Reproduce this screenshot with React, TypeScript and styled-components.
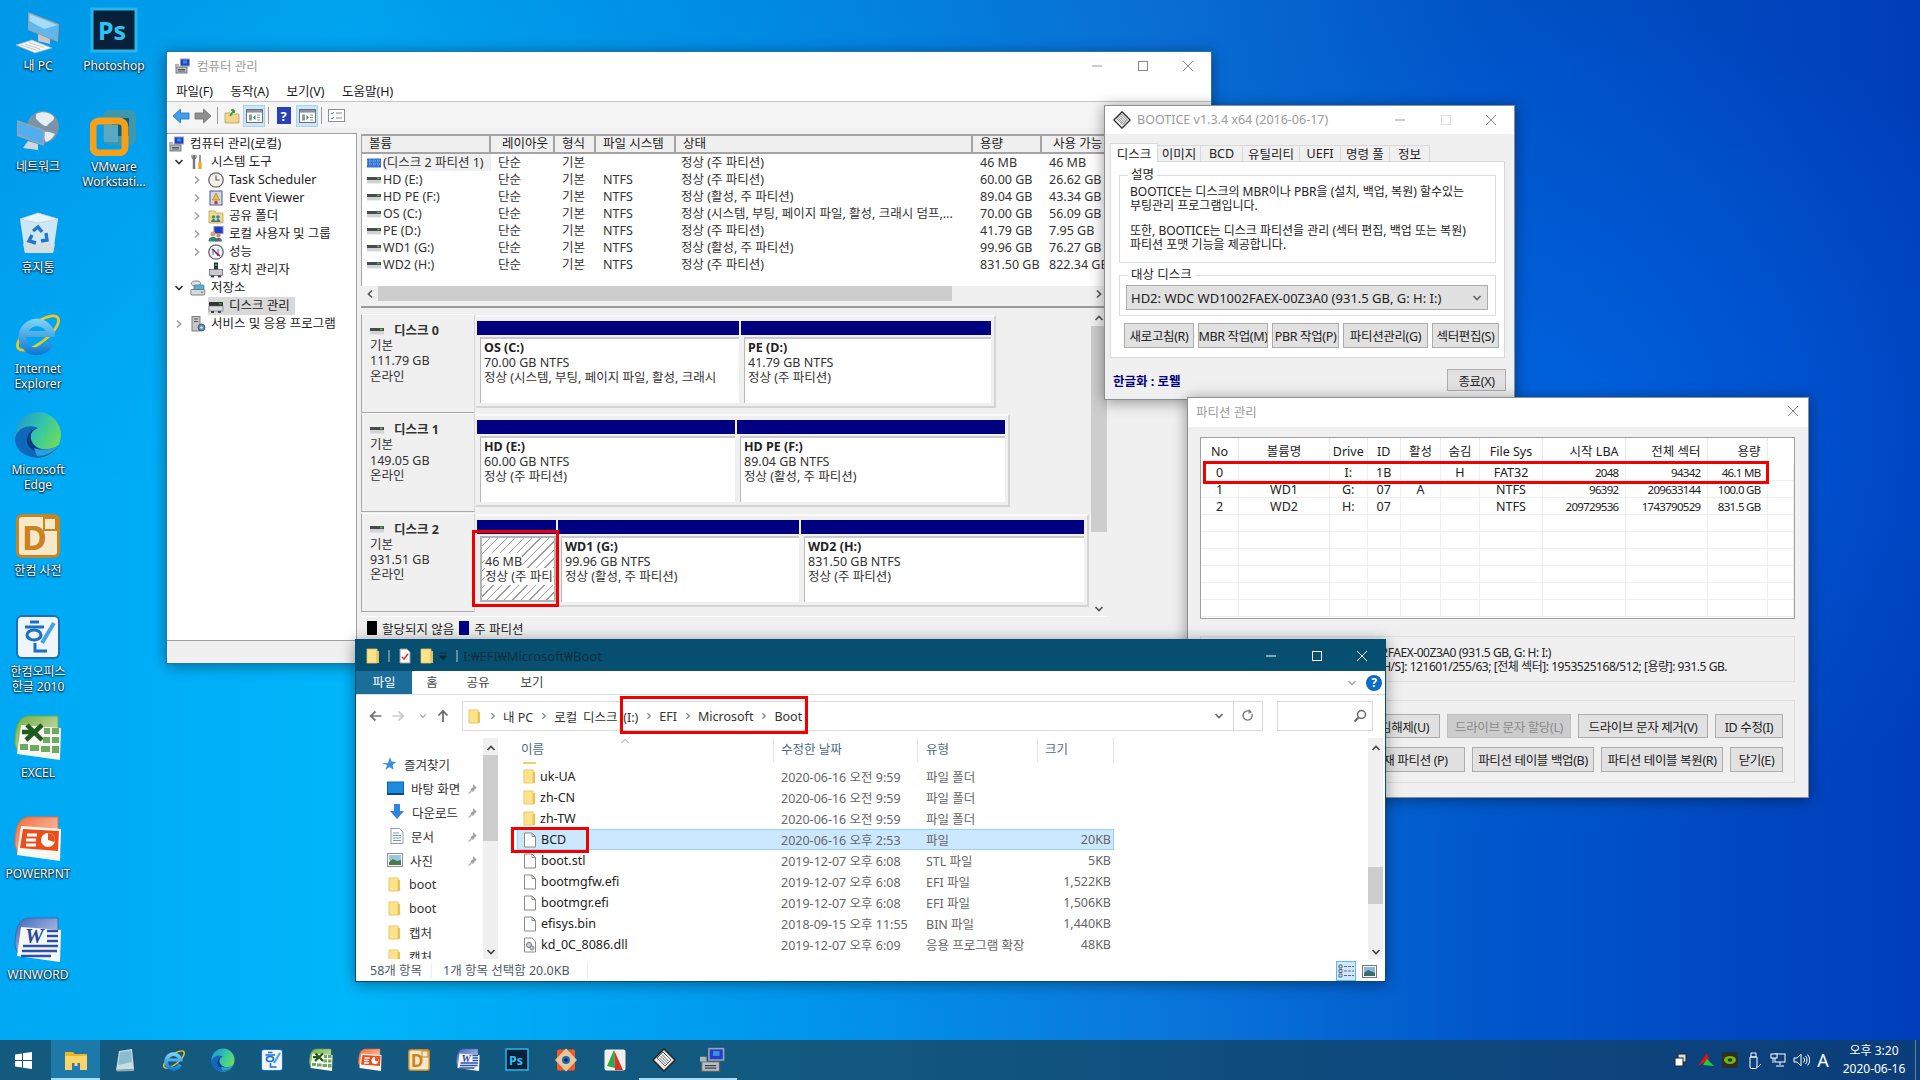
import React from "react";
import styled, { createGlobalStyle } from "styled-components";

const Global = createGlobalStyle`
  html, body { margin: 0; padding: 0; width: 1920px; height: 1080px; overflow: hidden; }
  body { font-family: "Noto Sans", "Noto Sans CJK KR", sans-serif; font-size: 12.5px; color: #1a1a1a; }
  * { box-sizing: border-box; }
`;

/* ---------- drawings ---------- */
type P = { s?: number };
const Ic = ({ s = 48, children, vb = "0 0 48 48" }: { s?: number; children: React.ReactNode; vb?: string }) => (
  <svg width={s} height={s} viewBox={vb} style={{ display: "block", flex: "none" }}>{children}</svg>
);

const PcIcon = ({ s }: P) => (
  <Ic s={s}>
    <polygon points="14,5 45,17 44,35 14,23" fill="#9aa3ad" />
    <polygon points="15.5,7 43.5,18 42.5,33 15.5,21.5" fill="#5db7f2" />
    <polygon points="15.5,7 43.5,18 30,22 15.5,14" fill="#a5dcfa" />
    <polygon points="24,27 36,32 36,37 24,34" fill="#c2c8ce" />
    <polygon points="2,38 18,33 38,41 21,46" fill="#f2f4f6" stroke="#aab2ba" strokeWidth=".7" />
    <path d="M7 38l15 5M11 37l15 5M15 35.5l15 5" stroke="#b6bdc4" strokeWidth=".8" />
  </Ic>
);
const NetIcon = ({ s }: P) => (
  <Ic s={s}>
    <circle cx="29" cy="19" r="16" fill="#7b93a8" />
    <path d="M22 6c6-3 14-2 18 3 1 4-5 5-7 9-4 1-8-5-11-7zM30 24c4-1 8 1 11 2-2 4-6 7-9 8-2-3-3-7-2-10z" fill="#e6edf2" />
    <polygon points="3,12 31,22 30,38 3,28" fill="#9aa3ad" />
    <polygon points="4.5,14 29.5,23 28.5,36 4.5,26.5" fill="#52aeef" />
    <polygon points="14,33 24,36 24,42 9,40" fill="#d2d6da" />
  </Ic>
);
const PsIcon = ({ s }: P) => (
  <Ic s={s}>
    <rect x="2" y="2" width="44" height="42" fill="#08203a" stroke="#28b6e8" strokeWidth="3" />
    <text x="8" y="33" fontFamily="Noto Sans" fontWeight="700" fontSize="25" fill="#2fc3f4">Ps</text>
  </Ic>
);
const VmIcon = ({ s }: P) => (
  <Ic s={s}>
    <rect x="13" y="2" width="33" height="35" rx="6" fill="#3d97ad" />
    <rect x="22" y="10" width="17" height="18" fill="#0d5e7e" />
    <rect x="3" y="13" width="32" height="32" rx="6" fill="none" stroke="#f6a01a" strokeWidth="7" />
    <rect x="14" y="17" width="14" height="17" fill="#5aa9c2" />
  </Ic>
);
const BinIcon = ({ s }: P) => (
  <Ic s={s}>
    <polygon points="6,10 24,4 44,10 39,44 11,44" fill="#cfe6f4" />
    <polygon points="6,10 24,4 44,10 24,14" fill="#e9f4fa" stroke="#b6cfe0" strokeWidth=".8" />
    <polygon points="9,35 41,35 39,44 11,44" fill="#d8dde0" />
    <path d="M19 22l5-4 4 5M32 24l1 7-6 1M22 34l-7-2 3-6" stroke="#2377c9" strokeWidth="3.4" fill="none" />
  </Ic>
);
const IeIcon = ({ s }: P) => (
  <Ic s={s}>
    <defs><linearGradient id="iee" gradientUnits="userSpaceOnUse" x1="0" y1="6" x2="0" y2="44"><stop offset="0" stopColor="#8adcf8" /><stop offset="1" stopColor="#1078d4" /></linearGradient></defs>
    <ellipse cx="24" cy="23" rx="25" ry="9.5" transform="rotate(-38 24 23)" fill="none" stroke="#f4c61e" strokeWidth="2.8" />
    <path d="M36 33A14.5 14.5 0 1 1 37 24" fill="none" stroke="url(#iee)" strokeWidth="7.5" />
    <rect x="11" y="21" width="30" height="6" fill="url(#iee)" />
  </Ic>
);
const EdgeIcon = ({ s }: P) => (
  <Ic s={s}>
    <defs>
      <linearGradient id="edg" x1="0" y1="0" x2="1" y2=".6"><stop offset="0" stopColor="#1f8fd8" /><stop offset=".55" stopColor="#33c6a8" /><stop offset="1" stopColor="#6fdc58" /></linearGradient>
    </defs>
    <circle cx="24" cy="24" r="23" fill="url(#edg)" />
    <path d="M1 28C2 18 14 12 24 17c-7 2-9 8-6 14 4 8 17 10 27 3-5 9-14 13-22 13C10 46 1 38 1 28z" fill="#1068bc" />
    <path d="M13 32c-1-8 4-14 11-15-7 2-9 8-6 14 3 6 10 9 18 8-6 4-19 3-23-7z" fill="#083a80" />
    <path d="M20 37c8 3 18 2 25-3-6 8-14 11-22 11z" fill="#2aa0e0" />
  </Ic>
);
const DictIcon = ({ s }: P) => (
  <Ic s={s}>
    <rect x="2" y="2" width="44" height="44" rx="6" fill="#c98321" />
    <rect x="5" y="5" width="38" height="38" rx="3" fill="#f6e8c8" />
    <text x="8" y="38" fontFamily="Noto Sans" fontWeight="700" fontSize="34" fill="#c98321">D</text>
    <rect x="30" y="6" width="12" height="12" fill="none" stroke="#c98321" strokeWidth="2" />
  </Ic>
);
const HwpIcon = ({ s }: P) => (
  <Ic s={s}>
    <rect x="2" y="2" width="44" height="44" rx="6" fill="#1f6eb8" />
    <rect x="4" y="4" width="40" height="40" rx="4" fill="#eef6fb" />
    <path d="M16 9h9M11 14h19" stroke="#1a6fc4" strokeWidth="3" />
    <ellipse cx="20" cy="22" rx="7" ry="5" fill="none" stroke="#1a6fc4" strokeWidth="3.2" />
    <path d="M21 30v8h12" fill="none" stroke="#1a6fc4" strokeWidth="3" />
    <path d="M28 30L40 10" stroke="#4aa3e0" strokeWidth="4" />
  </Ic>
);
const DocBase = ({ c1, c2, children, s }: P & { c1: string; c2: string; children: React.ReactNode }) => (
  <Ic s={s}>
    <defs><linearGradient id={c1.slice(1)} x1="0" y1="0" x2="1" y2="1"><stop offset="0" stopColor={c1} /><stop offset="1" stopColor={c2} /></linearGradient></defs>
    <path d="M1 30C1 12 5 2 16 2h28v30L4 38z" fill={`url(#${c1.slice(1)})`} stroke={c1} strokeWidth="1" />
    <polygon points="7,11 47,14 46,46 3,40" fill="#f8f8f2" />
    {children}
  </Ic>
);
const ExcelIcon = ({ s }: P) => (
  <DocBase s={s} c1="#6fae3c" c2="#dfe8d0">
    <path d="M8 18h15M13 11l15 15M28 11L12 26" stroke="#1d5c1a" strokeWidth="4.5" />
    <path d="M30 14h6v6h-6zM38 14h7v6h-7zM29 23h7v6h-7zM38 23h7v6h-7zM6 30h8v6H6zM16 31h9v6h-9zM27 32h9v6h-9zM38 32h7v7h-7z" fill="#6fa863" />
  </DocBase>
);
const PptIcon = ({ s }: P) => (
  <DocBase s={s} c1="#f26b3a" c2="#fbd9c6">
    <polygon points="9,14 45,16 44,36 6,33" fill="#e94e1b" />
    <path d="M13 20h10M12 25h10M12 30h10" stroke="#fff" strokeWidth="3" />
    <circle cx="34" cy="25" r="7" fill="#fff" />
    <path d="M34 25V18a7 7 0 0 1 6.6 9z" fill="#e94e1b" />
  </DocBase>
);
const WordIcon = ({ s }: P) => (
  <DocBase s={s} c1="#3e66b8" c2="#d4def0">
    <text x="11" y="27" fontFamily="Liberation Serif" fontWeight="700" fontStyle="italic" fontSize="21" fill="#2346a6">W</text>
    <path d="M33 15h11M33 20h11M33 25h11M9 30h35M8 35h35M7 40h30" stroke="#2d4fae" strokeWidth="2.6" />
  </DocBase>
);
const NoteIcon = ({ s }: P) => (
  <Ic s={s}>
    <polygon points="12,6 38,2 42,42 6,44" fill="#c8dde4" />
    <polygon points="14,8 36,5 38,28 10,34" fill="#8dbccc" />
    <polygon points="6,44 42,42 42,46 8,47" fill="#9aa8ae" />
  </Ic>
);
const ExplorerIcon = ({ s }: P) => (
  <Ic s={s} vb="0 0 24 24">
    <path d="M1 4h8l2 2h12v3H1z" fill="#f0b429" />
    <rect x="1" y="8" width="22" height="14" fill="#fdd567" />
    <rect x="8" y="15" width="8" height="7" fill="#2a78c0" />
    <rect x="10.5" y="15" width="3" height="3" fill="#fdd567" />
  </Ic>
);
const WinLogo = () => (
  <Ic s={17} vb="0 0 17 17">
    <path d="M0 2.4l7-1v6.6H0zM8 1.2L17 0v8H8zM0 9h7v6.6l-7-1zM8 9h9v8l-9-1.2z" fill="#fff" />
  </Ic>
);
const FsIcon = ({ s }: P) => (
  <Ic s={s}>
    <rect x="6" y="3" width="36" height="42" rx="3" fill="#ef5a2a" />
    <polygon points="24,1 46,24 24,47 2,24" fill="#e8c89a" />
    <circle cx="24" cy="24" r="8" fill="#1a66b8" />
    <circle cx="24" cy="24" r="3.4" fill="#0a2a50" />
  </Ic>
);
const RgIcon = ({ s }: P) => (
  <Ic s={s}>
    <rect x="3" y="3" width="42" height="42" rx="4" fill="#f2f0ea" />
    <polygon points="22,4 40,44 24,44" fill="#d8332a" />
    <polygon points="22,4 8,36 24,40" fill="#2aa84a" />
  </Ic>
);
const BootIcon = ({ s }: P) => (
  <Ic s={s}>
    <polygon points="24,2 46,24 24,46 2,24" fill="#e8e8e8" stroke="#222" strokeWidth="3" />
    <polygon points="22,8 38,24 26,36 10,20" fill="#fff" stroke="#333" strokeWidth="1.5" />
    <path d="M20 13l14 14M17 16l14 14M14 19l14 14" stroke="#333" strokeWidth="1.6" />
  </Ic>
);
const MgmtIcon = ({ s }: P) => (
  <Ic s={s} vb="0 0 16 16">
    <rect x="5" y="0.5" width="10" height="8" fill="#9aa0b0" />
    <rect x="6" y="1.5" width="8" height="6" fill="#1f3fd0" />
    <rect x="8" y="2.5" width="4" height="3" fill="#3a8ee0" />
    <rect x="1" y="9" width="11" height="6" fill="#b9bdc4" stroke="#5a5f68" strokeWidth=".8" />
    <path d="M3 11.5h7M3 13h7" stroke="#3a3f48" strokeWidth=".8" />
    <rect x="0" y="6" width="4" height="3" fill="#aeb3bc" />
  </Ic>
);
const ToolsIcon = () => (
  <Ic s={16} vb="0 0 16 16">
    <path d="M4 1v14" stroke="#777" strokeWidth="2.4" />
    <path d="M2 1v3l2 1 2-1V1" fill="none" stroke="#666" />
    <path d="M10 1v7" stroke="#999" strokeWidth="2" />
    <path d="M10 8v7" stroke="#e8b020" strokeWidth="3.4" />
  </Ic>
);
const ClockIcon = () => (
  <Ic s={16} vb="0 0 16 16">
    <circle cx="8" cy="8" r="7.2" fill="#f4f1e4" stroke="#667" strokeWidth="1.3" />
    <path d="M8 3.5V8h3.5" stroke="#556" fill="none" strokeWidth="1.1" />
  </Ic>
);
const EventIcon = () => (
  <Ic s={16} vb="0 0 16 16">
    <rect x="2" y="1" width="12" height="14" fill="#cfd8ea" stroke="#4a5a88" />
    <polygon points="8,3 11.5,10 4.5,10" fill="#f2c21e" stroke="#a07a10" strokeWidth=".6" />
    <circle cx="8" cy="12.5" r="1.8" fill="#d0352a" />
  </Ic>
);
const ShareIcon = () => (
  <Ic s={16} vb="0 0 16 16">
    <path d="M1 3h6l1 2h7v10H1z" fill="#f2dc8c" stroke="#b09a48" strokeWidth=".7" />
    <circle cx="5.5" cy="9" r="1.8" fill="#38a060" /><circle cx="10" cy="9" r="1.8" fill="#3a76c0" />
    <path d="M3 14c0-2 1.5-3 2.5-3S8 12 8 14zM8 14c0-2 1-3 2-3s2.5 1 2.5 3z" fill="#4a7a9a" />
  </Ic>
);
const UsersIcon = () => (
  <Ic s={16} vb="0 0 16 16">
    <rect x="6" y="0.5" width="9" height="7" fill="#1f3fd0" stroke="#8a90a0" />
    <circle cx="5" cy="8" r="2.6" fill="#d6a27a" />
    <path d="M0.5 15.5c0-3.6 2-4.6 4.5-4.6s4.5 1 4.5 4.6z" fill="#2a8a6a" />
    <circle cx="10.5" cy="9.5" r="2.2" fill="#c79472" />
    <path d="M7 15.5c0-3 1.5-3.6 3.5-3.6s3.5.6 3.5 3.6z" fill="#55688a" />
  </Ic>
);
const PerfIcon = () => (
  <Ic s={16} vb="0 0 16 16">
    <circle cx="8" cy="8" r="7.2" fill="#f2f2f0" stroke="#667" strokeWidth="1.3" />
    <path d="M4 5l8 7" stroke="#d02020" strokeWidth="1.6" />
    <path d="M5 11V5l5 7V5" stroke="#2244aa" strokeWidth=".8" fill="none" />
  </Ic>
);
const DeviceIcon = () => (
  <Ic s={16} vb="0 0 16 16">
    <rect x="6" y="0.5" width="4" height="7" fill="#333" />
    <rect x="7" y="2" width="2" height="2" fill="#3ab04a" />
    <rect x="1.5" y="7.5" width="13" height="6" fill="#c8ccd2" stroke="#666" strokeWidth=".8" />
    <rect x="3" y="13.5" width="3" height="2" fill="#444" /><rect x="10" y="13.5" width="3" height="2" fill="#444" />
  </Ic>
);
const StoreIcon = () => (
  <Ic s={16} vb="0 0 16 16">
    <ellipse cx="6" cy="3.5" rx="4.5" ry="2.6" fill="#dfe3e8" stroke="#667" strokeWidth=".8" />
    <rect x="4" y="5" width="10" height="5" rx="1" fill="#58b0d8" stroke="#3a7a98" strokeWidth=".7" />
    <rect x="0.8" y="9.5" width="14" height="5.5" rx="1" fill="#d6dade" stroke="#667" strokeWidth=".8" />
    <circle cx="12" cy="12.2" r="1" fill="#50b050" />
  </Ic>
);
const DiskMgIcon = () => (
  <Ic s={16} vb="0 0 16 16">
    <rect x="1" y="4" width="14" height="4" fill="#333" />
    <rect x="11" y="5" width="2.5" height="1.5" fill="#3ab04a" />
    <rect x="1" y="8" width="14" height="5" fill="#dadde0" stroke="#666" strokeWidth=".6" />
    <rect x="3" y="13" width="3" height="2" fill="#444" /><rect x="10" y="13" width="3" height="2" fill="#444" />
  </Ic>
);
const SvcIcon = () => (
  <Ic s={16} vb="0 0 16 16">
    <rect x="2" y="0.5" width="8" height="14.5" fill="#c4c8cc" stroke="#666" strokeWidth=".8" />
    <path d="M4 3h4M4 5.5h4" stroke="#555" />
    <circle cx="11.5" cy="11.5" r="3.5" fill="#5a88b8" stroke="#345" strokeWidth=".7" />
    <circle cx="11.5" cy="11.5" r="1.2" fill="#e8eef2" />
  </Ic>
);
const DriveGlyph = () => (
  <Ic s={16} vb="0 0 16 16">
    <rect x="1" y="5" width="14" height="3" fill="#4a4a4a" />
    <rect x="1" y="8" width="14" height="3.4" fill="#d0d2d4" />
    <rect x="11" y="5.6" width="2.5" height="1.6" fill="#44c060" />
  </Ic>
);
const HatchGlyph = () => (
  <Ic s={16} vb="0 0 16 16">
    <rect x="1" y="3.5" width="14" height="9" fill="#2f6fd0" />
    <path d="M1 6h14M1 9h14M4 3.5v9M8 3.5v9M12 3.5v9" stroke="#a8ccf4" strokeWidth=".8" strokeDasharray="1 1" />
  </Ic>
);
const FolderIc = ({ s = 16 }: P) => (
  <Ic s={s} vb="0 0 16 16">
    <path d="M2 1h10v14H2z" fill="#fde38c" stroke="#e6c35a" strokeWidth=".8" />
    <path d="M11.5 3H14v12h-2.5z" fill="#e6c35a" />
  </Ic>
);
const FileIc = () => (
  <Ic s={16} vb="0 0 16 16">
    <path d="M2.5 1h7.5l3.5 3.5V15h-11z" fill="#fff" stroke="#8a8a8a" />
    <path d="M10 1v3.5h3.5" fill="none" stroke="#8a8a8a" />
  </Ic>
);
const DllIc = () => (
  <Ic s={16} vb="0 0 16 16">
    <path d="M2.5 1h7.5l3.5 3.5V15h-11z" fill="#fff" stroke="#8a8a8a" />
    <circle cx="7" cy="8" r="2.6" fill="#c9cfd4" stroke="#76808a" />
    <circle cx="10" cy="11" r="2" fill="#c9cfd4" stroke="#76808a" />
  </Ic>
);
const Chev = ({ d = "down", c = "#555", w = 1.6, s = 10 }: { d?: "down" | "up" | "left" | "right"; c?: string; w?: number; s?: number }) => {
  const r = { down: 0, up: 180, left: 90, right: -90 }[d];
  return (
    <svg width={s} height={s} viewBox="0 0 10 10" style={{ flex: "none", display: "block" }}>
      <path d="M1.5 3l3.5 3.6L8.5 3" fill="none" stroke={c} strokeWidth={w} transform={`rotate(${r} 5 5)`} />
    </svg>
  );
};
const Arrow = ({ left, c }: { left?: boolean; c: string }) => (
  <svg width="14" height="14" viewBox="0 0 14 14" style={{ display: "block", transform: left ? "none" : "scaleX(-1)" }}>
    <path d="M1.5 7h11M6.5 2.5L1.5 7l5 4.5" fill="none" stroke={c} strokeWidth="1.7" />
  </svg>
);
const ThickArrow = ({ left, a, b }: { left?: boolean; a: string; b: string }) => (
  <svg width="18" height="16" viewBox="0 0 18 16" style={{ display: "block", transform: left ? "none" : "scaleX(-1)" }}>
    <path d="M1 8l7.5-7v4H17v6H8.5v4z" fill={a} stroke={b} strokeWidth=".8" />
  </svg>
);
const PanelIc = ({ right }: { right?: boolean }) => (
  <svg width="17" height="14" viewBox="0 0 17 14" style={{ display: "block" }}>
    <rect x=".5" y=".5" width="16" height="13" fill="#fff" stroke="#6a7078" />
    <rect x="1" y="1" width="15" height="2.6" fill="#8a93a0" />
    <path d="M3 5.5h3v6H3zM11 5.5h3v1H11zM11 8h3v1H11zM11 10.5h3v1H11z" fill="#909aa4" />
    <polygon points={right ? "7.5,6 7.5,11 10,8.5" : "9.5,6 9.5,11 7,8.5"} fill="#2c9a44" />
  </svg>
);

/* ---------- desktop ---------- */
const Screen = styled.div`
  width: 1920px; height: 1080px; display: flex; flex-direction: column; overflow: hidden;
  background:
    radial-gradient(ellipse 520px 420px at 1560px 420px, rgba(0, 110, 240, .55), rgba(0, 110, 240, 0)),
    linear-gradient(180deg, rgba(0, 60, 170, .16) 0, rgba(0, 60, 170, 0) 45%),
    linear-gradient(90deg, #00a8f4 0, #00b6fb 18%, #0098ee 40%, #0a78dc 60%, #0056ca 78%, #003ebb 100%);
`;
const Desktop = styled.div`position: relative; flex: 1; min-height: 0;`;
const IconGrid = styled.div`
  display: grid; grid-auto-flow: column; grid-template-rows: repeat(10, 101px); grid-auto-columns: 76px;
`;
const Tile = styled.div`
  display: flex; flex-direction: column; align-items: center; padding-top: 7px; color: #fff;
`;
const TileLabel = styled.div`
  margin-top: 3px; width: 76px; text-align: center; font-size: 12px; line-height: 15px; color: #fff;
  white-space: pre-line; text-shadow: 0 1px 2px #000, 0 0 2px rgba(0, 0, 0, .8);
`;

const Win = styled.div<{ $x: number; $y: number; $w: number; $h: number; $z: number; $b?: string }>`
  position: absolute; left: ${p => p.$x}px; top: ${p => p.$y}px; width: ${p => p.$w}px; height: ${p => p.$h}px;
  z-index: ${p => p.$z}; display: flex; flex-direction: column; background: #f0f0f0;
  border: 1px solid ${p => p.$b ?? "#8a8f94"}; box-shadow: 0 2px 14px rgba(0, 0, 0, .4); overflow: hidden;
`;
const TitleBar = styled.div<{ $h: number; $pb?: number }>`
  height: ${p => p.$h}px; flex: none; background: #fff; display: flex; align-items: center; padding: 0 0 ${p => p.$pb ?? 0}px 8px; gap: 6px; color: #9b9b9b; font-size: 12.5px;
`;
const WinBtns = styled.div<{ $c: string }>`
  margin-left: auto; display: flex; align-items: center; color: ${p => p.$c};
`;
const WinBtn = styled.div<{ $w?: number }>`width: ${p => p.$w ?? 45.5}px; display: flex; justify-content: center;`;
const WinGlyph = ({ k, c }: { k: "min" | "max" | "x"; c: string }) => (
  <svg width="12" height="12" viewBox="0 0 12 12" style={{ display: "block" }}>
    {k === "min" && <path d="M1 6h10" stroke={c} />}
    {k === "max" && <rect x="1.5" y="1.5" width="9" height="9" fill="none" stroke={c} />}
    {k === "x" && <path d="M1 1l10 10M11 1L1 11" stroke={c} />}
  </svg>
);

/* ---------- computer management ---------- */
const MenuBar = styled.div`
  height: 23px; flex: none; background: #fff; display: flex; align-items: center; padding-left: 9px; gap: 17.5px; border-bottom: 1px solid #c4c4c4;
`;
const ToolBar = styled.div`
  height: 26px; flex: none; background: #f5f5f5; display: flex; align-items: center; padding: 1px 0 0 3px;
`;
const ToolBtn = styled.div<{ $on?: boolean; $w?: number }>`
  width: ${p => p.$w ?? 22}px; height: 22px; display: flex; align-items: center; justify-content: center;
  background: ${p => (p.$on ? "#cde6f7" : "transparent")}; border: 1px solid ${p => (p.$on ? "#a6d4f2" : "transparent")};
`;
const ToolSep = styled.div`width: 1px; height: 17px; background: #9a9a9a; margin: 0 3px;`;
const CmBody = styled.div`flex: 1; min-height: 0; display: flex; gap: 4px; padding: 5px 0 22px;`;
const TreePane = styled.div`width: 190px; flex: none; background: #fff; border: 1px solid #a0a0a0; border-left: none; padding-top: 1px;`;
const TreeRow = styled.div<{ $pad: number }>`
  height: 18px; display: flex; align-items: center; padding-left: ${p => p.$pad}px; white-space: nowrap;
`;
const TreeChev = styled.div`width: 14px; flex: none; margin-right: 4px; display: flex; justify-content: center;`;
const TreeLabel = styled.span<{ $sel?: boolean }>`
  margin-left: ${p => (p.$sel ? "0" : "5px")}; background: ${p => (p.$sel ? "#d9d9d9" : "none")}; padding: ${p => (p.$sel ? "0 5px" : "0")};
  line-height: 18px; color: #222;
`;
const SelWrap = styled.div`display: flex; align-items: center; background: #d9d9d9;`;
const RightPane = styled.div`width: 746px; flex: none; display: flex; flex-direction: column; margin-top: 1px;`;
const VolGrid = styled.div`display: grid; grid-template-columns: 129px 64px 41px 80px 297px 69px 66px;`;
const VolHead = styled(VolGrid)`
  height: 20px; border-top: 2px solid #a4a4a4; border-bottom: 2px solid #a4a4a4; background: #f0f0f0; border-left: 1px solid #a4a4a4;
`;
const VolHeadCell = styled.div<{ $pl?: number }>`
  border-right: 2px solid #a4a4a4; padding-left: ${p => p.$pl ?? 7}px; line-height: 16px; white-space: nowrap; overflow: hidden;
`;
const VolBody = styled.div`height: 132px; background: #fff; border-left: 1px solid #a4a4a4;`;
const VolRow = styled(VolGrid)`height: 17px; line-height: 17px; white-space: nowrap;`;
const VolCell = styled.div<{ $pl?: number }>`padding-left: ${p => p.$pl ?? 7}px; overflow: hidden; color: #333;`;
const VolName = styled.div`display: flex; align-items: center; padding-left: 4px; gap: 1px; overflow: hidden;`;
const VolNameText = styled.span<{ $hl?: boolean }>`flex: 1; background: ${p => (p.$hl ? "#f0f0f0" : "none")}; color: #333;`;
const HScroll = styled.div`height: 15px; flex: none; display: flex; align-items: center; background: #f0f0f0;`;
const HThumb = styled.div`width: 574px; height: 15px; background: #cdcdcd;`;
const ScrollEnd = styled.div<{ $w: number }>`width: ${p => p.$w}px; display: flex; justify-content: center; flex: none;`;
const Spacer = styled.div`flex: 1;`;
const Divider = styled.div`height: 2px; margin-top: 5px; background: #9c9c9c; flex: none;`;
const DiskWrap = styled.div`display: flex; height: 308px; flex: none;`;
const DiskList = styled.div`flex: 1; min-width: 0; padding-top: 6px;`;
const VScroll = styled.div<{ $w?: number }>`
  width: ${p => p.$w ?? 16}px; flex: none; display: flex; flex-direction: column; align-items: center; background: #f0f0f0;
`;
const VThumb = styled.div<{ $top: number; $h: number }>`
  width: 100%; height: ${p => p.$h}px; margin-top: ${p => p.$top}px; background: #cdcdcd;
`;
const VEnd = styled.div<{ $mt?: string }>`height: 14px; display: flex; align-items: center; margin-top: ${p => p.$mt ?? "0"};`;
const DiskRow = styled.div`height: 99.4px; display: flex; align-items: flex-start;`;
const DiskLabel = styled.div`
  width: 114px; height: 99px; flex: none; padding: 8px 0 0 8px; border-left: 1px solid #a8a8a8; border-top: 1px solid #fff; border-bottom: 1px solid #a8a8a8;
  border-right: 1px solid #d8d8d8; line-height: 15.3px; color: #333;
`;
const DiskName = styled.div`display: flex; align-items: center; gap: 9px; font-weight: 700; height: 15px; margin-left: -1px; margin-bottom: 0;`;
const DiskBox = styled.div<{ $w: number }>`
  width: ${p => p.$w}px; height: 93px; margin: 1px 0 0 1px; display: flex; gap: 2px; padding: 4px 3px 3px 1px;
  border: 2px solid #d4d4d4; border-top-color: #fafafa; border-left: none;
`;
const Part = styled.div<{ $w?: number }>`
  flex: ${p => (p.$w ? `0 0 ${p.$w}px` : "1")}; min-width: 0; display: flex; flex-direction: column;
`;
const PartBar = styled.div`height: 14px; background: #000080; flex: none;`;
const PartBox = styled.div<{ $hatch?: boolean }>`
  margin: 2px 0 0 3px; height: 69px; border-top: 2px solid #c9c9c9; border-left: 1px solid #b8b8b8; padding: 1px 0 0 3px; line-height: 15px;
  overflow: hidden; white-space: nowrap; color: #333; background: ${p => (p.$hatch
    ? "repeating-linear-gradient(135deg, #fff 0 5px, #9c9c9c 5px 6px)"
    : "#fff")};
  ${p => (p.$hatch ? "border: 2px solid #b4b4b4;" : "")}
`;
const PartTitle = styled.div`font-weight: 700; color: #222;`;
const HatchText = styled.span`background: #fff;`;
const Legend = styled.div`
  height: 23px; flex: none; display: flex; align-items: center; padding-left: 6px; border-top: 1px solid #fff; color: #222;
`;
const LegendSwatch = styled.span<{ $c: string }>`width: 10px; height: 14px; background: ${p => p.$c}; margin-right: 5px; flex: none;`;
const LegendText = styled.span`margin-right: 5px;`;

/* ---------- bootice ---------- */
const Tabs = styled.div`display: flex; height: 19px; margin: 9px 0 0 5px; flex: none; align-items: flex-end;`;
const Tab = styled.div<{ $w: number; $on?: boolean }>`
  width: ${p => p.$w}px; height: ${p => (p.$on ? 19 : 17)}px; display: flex; align-items: center; justify-content: center; color: #222;
  background: ${p => (p.$on ? "#fff" : "#f0f0f0")}; border: 1px solid #d9d9d9; border-bottom: ${p => (p.$on ? "none" : "1px solid #d9d9d9")}; border-left: ${p => (p.$on ? "1px solid #d9d9d9" : "none")};
  white-space: nowrap; position: relative; z-index: ${p => (p.$on ? 1 : 0)};
`;
const TabPage = styled.div`
  margin: -1px 9px 0 5px; height: 197px; background: #fff; border: 1px solid #d9d9d9; padding: 13px 8px 0 8px; flex: none;
`;
const Group = styled.div<{ $h: number; $mt?: number }>`
  position: relative; height: ${p => p.$h}px; margin-top: ${p => p.$mt ?? 0}px; border: 1px solid #dcdcdc; padding: 9px 8px 0 10px;
`;
const GroupTitle = styled.span`
  position: absolute; left: 8px; top: -9px; background: #fff; padding: 0 3px; line-height: 16px; color: #222;
`;
const DescLine = styled.div<{ $mb?: number }>`line-height: 14px; margin-bottom: ${p => p.$mb ?? 0}px; white-space: nowrap; font-size: 12px; color: #222;`;
const Combo = styled.div`
  height: 25px; margin: 0 -1px 0 -4px; background: #e1e1e1; border: 1px solid #adadad; display: flex; align-items: center; justify-content: space-between; padding: 0 5px 0 4px; font-size: 13px; color: #222;
`;
const BtnRow = styled.div`display: flex; justify-content: space-between; margin: 13px -6px 0 -6px; gap: 4px;`;
const GreyBtn = styled.div<{ $w?: number; $h?: number; $off?: boolean }>`
  width: ${p => (p.$w ? `${p.$w}px` : "auto")}; height: ${p => p.$h ?? 25}px; flex: none; display: flex; align-items: center; justify-content: center; white-space: nowrap; letter-spacing: -.35px;
  background: ${p => (p.$off ? "#cccccc" : "#e1e1e1")}; border: 1px solid ${p => (p.$off ? "#bfbfbf" : "#adadad")}; color: ${p => (p.$off ? "#8a8a8a" : "#222")}; overflow: hidden;
`;
const BootFoot = styled.div`display: flex; align-items: center; justify-content: space-between; margin: 10px 8px 0 8px; height: 24px;`;
const BootCredit = styled.span`color: #000080; font-weight: 700;`;

/* ---------- partition manager ---------- */
const PartBody = styled.div`flex: 1; padding: 10px 13px 0 12px; min-height: 0;`;
const PmList = styled.div`height: 182px; background: #fff; border: 1px solid #a0a0a0; overflow: hidden;`;
const PmGrid = styled.div`display: grid; grid-template-columns: 38px 91px 37.5px 33.5px 40px 39px 63px 82.5px 82px 60px 1fr;`;
const PmHead = styled(PmGrid)`height: 26px; align-items: center;`;
const PmHeadCell = styled.div<{ $r?: boolean }>`
  text-align: ${p => (p.$r ? "right" : "center")}; padding-right: ${p => (p.$r ? "6px" : "0")}; border-right: 1px solid #ececec; height: 26px; line-height: 28px; white-space: nowrap; color: #222;
`;
const PmRow = styled(PmGrid)`height: 17px; line-height: 17px; border-bottom: 1px solid #efefef;`;
const PmCell = styled.div<{ $r?: boolean }>`
  text-align: ${p => (p.$r ? "right" : "center")}; padding-right: ${p => (p.$r ? "6px" : "0")}; border-right: 1px solid #efefef; white-space: nowrap; color: #222;
  ${p => (p.$r ? "font-size: 11.5px; letter-spacing: -.7px;" : "")}
`;
const InfoBox = styled.div`
  margin-top: 17px; height: 46px; border: 1px solid #dedede; padding-top: 9px; overflow: hidden; color: #222; font-size: 12px; letter-spacing: -.45px;
`;
const InfoLine = styled.div<{ $pr: number }>`
  text-align: right; padding-right: ${p => p.$pr}px; line-height: 14px; white-space: nowrap;
`;
const ActionBox = styled.div`
  margin-top: 18px; height: 83px; border: 1px solid #dedede; padding: 13px 11px 0 0; display: flex; flex-direction: column; gap: 9px;
`;
const ActionRow = styled.div`display: flex; justify-content: flex-end; gap: 7px;`;

/* ---------- explorer ---------- */
const ExTitle = styled.div`
  height: 31px; flex: none; background: #064f70; display: flex; align-items: center; padding-left: 9px; color: #0e2a38; font-size: 13px;
`;
const QSep = styled.div<{ $r?: number }>`width: 2px; height: 12px; background: #5d8ca2; margin: 0 ${p => p.$r ?? 7}px 0 7px;`;
const QGap = styled.span<{ $w: number }>`width: ${p => p.$w}px; flex: none;`;
const QTitle = styled.span`color: #10303f;`;
const RibbonTabs = styled.div`
  height: 24px; flex: none; background: #fff; display: flex; align-items: stretch; border-bottom: 1px solid #dcdcdc; color: #333; position: relative;
`;
const RibTab = styled.div<{ $w: number; $on?: boolean }>`
  width: ${p => p.$w}px; display: flex; align-items: center; justify-content: center;
  background: ${p => (p.$on ? "#1b6e99" : "none")}; color: ${p => (p.$on ? "#fff" : "#444")}; padding-bottom: 2px;
`;
const RibRight = styled.div`margin-left: auto; display: flex; align-items: center; gap: 9px; padding-right: 3px;`;
const Help = styled.div`
  width: 16px; height: 16px; border-radius: 50%; background: #0a6cc4; color: #fff; font-weight: 700; font-size: 12px; display: flex; align-items: center; justify-content: center;
`;
const NavRow = styled.div`height: 43px; flex: none; background: #fff; display: flex; align-items: flex-start; padding-top: 6px;`;
const NavBtns = styled.div`width: 106px; flex: none; height: 30px; display: flex; align-items: center; padding-left: 12px;`;
const NavBtn = styled.div<{ $w: number }>`width: ${p => p.$w}px; display: flex; justify-content: center;`;
const Address = styled.div`
  width: 801px; height: 30px; flex: none; border: 1px solid #d9d9d9; display: flex; align-items: center; padding-left: 4px; color: #333;
`;
const Crumb = styled.span`white-space: nowrap;`;
const WideCrumb = styled(Crumb)`word-spacing: 2.5px;`;
const CrumbGap = styled.div`width: 21px; flex: none; display: flex; justify-content: center;`;
const AddrDrop = styled.div`margin-left: auto; display: flex; align-items: stretch; height: 100%;`;
const DropCell = styled.div<{ $line?: boolean; $w: number }>`
  width: ${p => p.$w}px; display: flex; align-items: center; justify-content: center; border-left: ${p => (p.$line ? "1px solid #d9d9d9" : "none")};
`;
const Search = styled.div`
  width: 96px; height: 30px; flex: none; margin-left: 14px; border: 1px solid #d9d9d9; display: flex; align-items: center; justify-content: flex-end; padding-right: 5px;
`;
const ExMain = styled.div`flex: 1; min-height: 0; background: #fff; display: flex; position: relative;`;
const NavPane = styled.div`width: 127px; flex: none; padding-top: 14px; overflow: hidden; color: #333;`;
const NavItem = styled.div<{ $pad: number }>`
  height: 24px; display: flex; align-items: center; padding-left: ${p => p.$pad}px; gap: 7px; white-space: nowrap; position: relative;
`;
const Pin = styled.span`position: absolute; left: 110px; top: 6px;`;
const FileList = styled.div`flex: 1; min-width: 0; overflow: hidden; padding-left: 19px;`;
const FileGrid = styled.div`display: grid; width: 597px; grid-template-columns: 257px 144px 120px 76px;`;
const FileHead = styled(FileGrid)`height: 24px; align-items: stretch; position: relative; color: #4d6a85;`;
const FileHeadCell = styled.div<{ $pl: number; $line?: boolean }>`
  padding-left: ${p => p.$pl}px; line-height: 24px; border-right: ${p => (p.$line ? "1px solid #e5e5e5" : "none")};
`;
const SortMark = styled.div`position: absolute; left: 103px; top: -2px;`;
const Stub = styled.div`width: 13px; height: 2px; margin: 0 0 2px 6px; background: #f2cf62;`;
const FileRow = styled(FileGrid)<{ $sel?: boolean }>`
  height: 21px; align-items: center; white-space: nowrap; color: #666;
  background: ${p => (p.$sel ? "#cce8ff" : "none")}; box-shadow: ${p => (p.$sel ? "inset 0 0 0 1px #99d1ff" : "none")};
`;
const FileName = styled.div`display: flex; align-items: center; gap: 3px; padding-left: 5px; color: #222;`;
const FileCell = styled.div<{ $pl?: number; $r?: boolean }>`
  padding-left: ${p => p.$pl ?? 7}px; text-align: ${p => (p.$r ? "right" : "left")}; padding-right: ${p => (p.$r ? "3px" : "0")};
`;
const StatusBar = styled.div`
  height: 22px; flex: none; background: #fff; display: flex; align-items: center; padding: 2px 0 0 14px; color: #4d5a66; position: relative;
`;
const StatusCell = styled.span<{ $w: number }>`width: ${p => p.$w}px; border-right: 1px solid #eee; height: 16px; line-height: 16px; margin-right: 11px; white-space: nowrap;`;
const ViewBtns = styled.div`margin-left: auto; display: flex; align-items: center; height: 100%; padding-right: 6px; gap: 3px;`;
const ViewBtn = styled.div<{ $on?: boolean }>`
  width: 20px; height: 20px; display: flex; align-items: center; justify-content: center;
  background: ${p => (p.$on ? "#cce8ff" : "none")}; border: 1px solid ${p => (p.$on ? "#66b4e8" : "transparent")};
`;

/* ---------- overlays and taskbar ---------- */
const Marker = styled.div<{ $x: number; $y: number; $w: number; $h: number }>`
  position: absolute; left: ${p => p.$x}px; top: ${p => p.$y}px; width: ${p => p.$w}px; height: ${p => p.$h}px; z-index: 9; border: 3px solid #f20000;
`;
const TaskBar = styled.div`
  height: 40px; flex: none; display: flex; align-items: stretch; background: linear-gradient(90deg, #14597e 0, #135a80 40%, #0f4d7e 65%, #0b3d7a 100%); color: #fff;
`;
const StartBtn = styled.div`width: 51px; display: flex; align-items: center; justify-content: center; padding-right: 4px;`;
const TaskItem = styled.div<{ $on?: boolean; $open?: boolean }>`
  width: 49px; display: flex; align-items: center; justify-content: center;
  background: ${p => (p.$on ? "#1d7aa8" : "none")};
  box-shadow: ${p => (p.$on || p.$open ? "inset 0 -2px 0 #a8dcf5" : "none")};
`;
const Tray = styled.div`margin-left: auto; display: flex; align-items: center;`;
const TrayItem = styled.div<{ $w: number }>`width: ${p => p.$w}px; display: flex; justify-content: center; font-size: 18px; line-height: 1;`;
const Clock = styled.div`
  width: 76px; margin-left: 3px; text-align: center; font-size: 12px; line-height: 18px; color: #fff; white-space: nowrap;
`;
const ShowDesk = styled.div`width: 5px; margin-left: 3px; border-left: 1px solid #5d7f9f; align-self: stretch;`;

/* ---------- data ---------- */
const tiles = [
  [<PcIcon key="a" />, "내 PC"], [<NetIcon key="a" />, "네트워크"], [<BinIcon key="a" />, "휴지통"],
  [<IeIcon key="a" />, "Internet\nExplorer"], [<EdgeIcon key="a" />, "Microsoft\nEdge"], [<DictIcon key="a" />, "한컴 사전"],
  [<HwpIcon key="a" />, "한컴오피스\n한글 2010"], [<ExcelIcon key="a" />, "EXCEL"], [<PptIcon key="a" />, "POWERPNT"], [<WordIcon key="a" />, "WINWORD"],
  [<PsIcon key="a" />, "Photoshop"], [<VmIcon key="a" />, "VMware\nWorkstati..."],
] as const;

const vols = [
  ["(디스크 2 파티션 1)", "단순", "기본", "", "정상 (주 파티션)", "46 MB", "46 MB"],
  ["HD (E:)", "단순", "기본", "NTFS", "정상 (주 파티션)", "60.00 GB", "26.62 GB"],
  ["HD PE (F:)", "단순", "기본", "NTFS", "정상 (활성, 주 파티션)", "89.04 GB", "43.34 GB"],
  ["OS (C:)", "단순", "기본", "NTFS", "정상 (시스템, 부팅, 페이지 파일, 활성, 크래시 덤프,...", "70.00 GB", "56.09 GB"],
  ["PE (D:)", "단순", "기본", "NTFS", "정상 (주 파티션)", "41.79 GB", "7.95 GB"],
  ["WD1 (G:)", "단순", "기본", "NTFS", "정상 (활성, 주 파티션)", "99.96 GB", "76.27 GB"],
  ["WD2 (H:)", "단순", "기본", "NTFS", "정상 (주 파티션)", "831.50 GB", "822.34 GB"],
];

const disks = [
  { name: "디스크 0", size: "111.79 GB", w: 520, parts: [
    { w: 262, t: "OS  (C:)", a: "70.00 GB NTFS", b: "정상 (시스템, 부팅, 페이지 파일, 활성, 크래시" },
    { t: "PE  (D:)", a: "41.79 GB NTFS", b: "정상 (주 파티션)" } ] },
  { name: "디스크 1", size: "149.05 GB", w: 534, parts: [
    { w: 258, t: "HD  (E:)", a: "60.00 GB NTFS", b: "정상 (주 파티션)" },
    { t: "HD PE  (F:)", a: "89.04 GB NTFS", b: "정상 (활성, 주 파티션)" } ] },
  { name: "디스크 2", size: "931.51 GB", w: 613, parts: [
    { w: 79, hatch: true, t: "", a: "46 MB", b: "정상 (주 파티션)" },
    { w: 241, t: "WD1  (G:)", a: "99.96 GB NTFS", b: "정상 (활성, 주 파티션)" },
    { t: "WD2  (H:)", a: "831.50 GB NTFS", b: "정상 (주 파티션)" } ] },
];

const pmCols = [
  ["No", 0], ["볼륨명", 0], ["Drive", 0], ["ID", 0], ["활성", 0], ["숨김", 0], ["File Sys", 0], ["시작 LBA", 1], ["전체 섹터", 1], ["용량", 1],
] as const;
const pmRows = [
  ["0", "", "I:", "1B", "", "H", "FAT32", "2048", "94342", "46.1 MB"],
  ["1", "WD1", "G:", "07", "A", "", "NTFS", "96392", "209633144", "100.0 GB"],
  ["2", "WD2", "H:", "07", "", "", "NTFS", "209729536", "1743790529", "831.5 GB"],
  ...Array.from({ length: 6 }, () => ["", "", "", "", "", "", "", "", "", ""]),
];

const files: { n: string; d: string; t: string; s?: string; k: "folder" | "file" | "dll"; sel?: boolean }[] = [
  { n: "uk-UA", d: "2020-06-16 오전 9:59", t: "파일 폴더", k: "folder" },
  { n: "zh-CN", d: "2020-06-16 오전 9:59", t: "파일 폴더", k: "folder" },
  { n: "zh-TW", d: "2020-06-16 오전 9:59", t: "파일 폴더", k: "folder" },
  { n: "BCD", d: "2020-06-16 오후 2:53", t: "파일", s: "20KB", k: "file", sel: true },
  { n: "boot.stl", d: "2019-12-07 오후 6:08", t: "STL 파일", s: "5KB", k: "file" },
  { n: "bootmgfw.efi", d: "2019-12-07 오후 6:08", t: "EFI 파일", s: "1,522KB", k: "file" },
  { n: "bootmgr.efi", d: "2019-12-07 오후 6:08", t: "EFI 파일", s: "1,506KB", k: "file" },
  { n: "efisys.bin", d: "2018-09-15 오후 11:55", t: "BIN 파일", s: "1,440KB", k: "file" },
  { n: "kd_0C_8086.dll", d: "2019-12-07 오후 6:09", t: "응용 프로그램 확장", s: "48KB", k: "dll" },
];

const PinIc = () => (
  <svg width="12" height="12" viewBox="0 0 12 12"><path d="M7 1l4 4-2 1-2 3-1-1-3 3-.7-.7 3-3-1-1 3-2z" fill="#9aa0a6" /></svg>
);

const taskIcons = [NoteIcon, IeIcon, EdgeIcon, HwpIcon, ExcelIcon, PptIcon, DictIcon, WordIcon, PsIcon, FsIcon, RgIcon];

export default function App() {
  return (
    <Screen>
      <Global />
      <Desktop>
        <IconGrid>
          {tiles.map(([ic, label]) => (
            <Tile key={label}>{ic}<TileLabel>{label}</TileLabel></Tile>
          ))}
        </IconGrid>

        {/* Computer management */}
        <Win $x={166} $y={51} $w={1046} $h={613} $z={1} $b="#1c78b0">
          <TitleBar $h={27}>
            <MgmtIcon s={16} />컴퓨터 관리
            <WinBtns $c="#888">
              <WinBtn><WinGlyph k="min" c="#999" /></WinBtn><WinBtn><WinGlyph k="max" c="#888" /></WinBtn><WinBtn><WinGlyph k="x" c="#888" /></WinBtn>
            </WinBtns>
          </TitleBar>
          <MenuBar>
            <span>파일(F)</span><span>동작(A)</span><span>보기(V)</span><span>도움말(H)</span>
          </MenuBar>
          <ToolBar>
            <ToolBtn><ThickArrow left a="#3f9fe8" b="#1f6fc0" /></ToolBtn>
            <ToolBtn><ThickArrow a="#8f8f8f" b="#6d6d6d" /></ToolBtn>
            <ToolSep />
            <ToolBtn>
              <svg width="16" height="16" viewBox="0 0 16 16"><path d="M1 5h5l1 1h8v9H1z" fill="#f0d68a" stroke="#b89a48" strokeWidth=".7" /><path d="M6 8l4-6M10 2H7M10 2v3" stroke="#2f9a3a" strokeWidth="1.6" fill="none" /></svg>
            </ToolBtn>
            <ToolBtn $on><PanelIc /></ToolBtn>
            <ToolSep />
            <ToolBtn $w={24}>
              <svg width="14" height="17" viewBox="0 0 14 17"><rect width="14" height="17" fill="#2a3fb8" /><text x="3.5" y="14" fill="#fff" fontFamily="Noto Sans" fontWeight="700" fontSize="13">?</text></svg>
            </ToolBtn>
            <ToolBtn $on><PanelIc right /></ToolBtn>
            <ToolSep />
            <ToolBtn>
              <svg width="17" height="13" viewBox="0 0 17 13"><rect x=".5" y=".5" width="16" height="12" fill="#fff" stroke="#8a8f96" /><path d="M3 4l1 1 2-2M3 9l1 1 2-2" stroke="#3a80c0" fill="none" /><path d="M8 4h6M8 9h6" stroke="#888" /></svg>
            </ToolBtn>
          </ToolBar>
          <CmBody>
            <TreePane>
              <TreeRow $pad={2}><MgmtIcon s={16} /><TreeLabel>컴퓨터 관리(로컬)</TreeLabel></TreeRow>
              <TreeRow $pad={5}><TreeChev><Chev c="#333" /></TreeChev><ToolsIcon /><TreeLabel>시스템 도구</TreeLabel></TreeRow>
              <TreeRow $pad={23}><TreeChev><Chev d="right" c="#a0a0a0" /></TreeChev><ClockIcon /><TreeLabel>Task Scheduler</TreeLabel></TreeRow>
              <TreeRow $pad={23}><TreeChev><Chev d="right" c="#a0a0a0" /></TreeChev><EventIcon /><TreeLabel>Event Viewer</TreeLabel></TreeRow>
              <TreeRow $pad={23}><TreeChev><Chev d="right" c="#a0a0a0" /></TreeChev><ShareIcon /><TreeLabel>공유 폴더</TreeLabel></TreeRow>
              <TreeRow $pad={23}><TreeChev><Chev d="right" c="#a0a0a0" /></TreeChev><UsersIcon /><TreeLabel>로컬 사용자 및 그룹</TreeLabel></TreeRow>
              <TreeRow $pad={23}><TreeChev><Chev d="right" c="#a0a0a0" /></TreeChev><PerfIcon /><TreeLabel>성능</TreeLabel></TreeRow>
              <TreeRow $pad={41}><DeviceIcon /><TreeLabel>장치 관리자</TreeLabel></TreeRow>
              <TreeRow $pad={5}><TreeChev><Chev c="#333" /></TreeChev><StoreIcon /><TreeLabel>저장소</TreeLabel></TreeRow>
              <TreeRow $pad={41}><SelWrap><DiskMgIcon /><TreeLabel $sel>디스크 관리</TreeLabel></SelWrap></TreeRow>
              <TreeRow $pad={5}><TreeChev><Chev d="right" c="#a0a0a0" /></TreeChev><SvcIcon /><TreeLabel>서비스 및 응용 프로그램</TreeLabel></TreeRow>
            </TreePane>
            <RightPane>
              <VolHead>
                {["볼륨", "레이아웃", "형식", "파일 시스템", "상태", "용량", "사용 가능"].map(h => (
                  <VolHeadCell key={h} $pl={h === "레이아웃" || h === "사용 가능" ? 11 : 7}>{h}</VolHeadCell>
                ))}
              </VolHead>
              <VolBody>
                {vols.map((r, i) => (
                  <VolRow key={r[0]}>
                    <VolName>{i === 0 ? <HatchGlyph /> : <DriveGlyph />}<VolNameText $hl={i === 0}>{r[0]}</VolNameText></VolName>
                    {r.slice(1).map((c, j) => <VolCell key={j} $pl={j === 3 ? 5 : 7}>{c}</VolCell>)}
                  </VolRow>
                ))}
              </VolBody>
              <HScroll>
                <ScrollEnd $w={17}><Chev d="left" c="#555" /></ScrollEnd>
                <HThumb />
                <Spacer />
                <ScrollEnd $w={17}><Chev d="right" c="#555" /></ScrollEnd>
              </HScroll>
              <Divider />
              <DiskWrap>
                <DiskList>
                  {disks.map(d => (
                    <DiskRow key={d.name}>
                      <DiskLabel>
                        <DiskName><DriveGlyph />{d.name}</DiskName>
                        <div>기본</div>
                        <div>{d.size}</div>
                        <div>온라인</div>
                      </DiskLabel>
                      <DiskBox $w={d.w}>
                        {d.parts.map((p, i) => (
                          <Part key={i} $w={p.w}>
                            <PartBar />
                            <PartBox $hatch={"hatch" in p && p.hatch}>
                              <PartTitle>{p.t || "\u00a0"}</PartTitle>
                              {"hatch" in p && p.hatch
                                ? <><div><HatchText>{p.a}</HatchText></div><div><HatchText>{p.b}</HatchText></div></>
                                : <><div>{p.a}</div><div>{p.b}</div></>}
                            </PartBox>
                          </Part>
                        ))}
                      </DiskBox>
                    </DiskRow>
                  ))}
                </DiskList>
                <VScroll>
                  <VEnd $mt="3px"><Chev d="up" /></VEnd>
                  <VThumb $top={1} $h={206} />
                  <Spacer />
                  <VEnd $mt="0"><Chev /></VEnd>
                </VScroll>
              </DiskWrap>
              <Legend>
                <LegendSwatch $c="#000" /><LegendText>할당되지 않음</LegendText>
                <LegendSwatch $c="#000080" /><LegendText>주 파티션</LegendText>
              </Legend>
            </RightPane>
          </CmBody>
        </Win>

        {/* Bootice */}
        <Win $x={1104} $y={105} $w={411} $h={295} $z={2}>
          <TitleBar $h={28} $pb={1}>
            <BootIcon s={18} />BOOTICE v1.3.4 x64 (2016-06-17)
            <WinBtns $c="#888">
              <WinBtn><WinGlyph k="min" c="#999" /></WinBtn><WinBtn><WinGlyph k="max" c="#ddd" /></WinBtn><WinBtn><WinGlyph k="x" c="#888" /></WinBtn>
            </WinBtns>
          </TitleBar>
          <Tabs>
            <Tab $w={48} $on>디스크</Tab><Tab $w={43}>이미지</Tab><Tab $w={42}>BCD</Tab><Tab $w={57}>유틸리티</Tab><Tab $w={41}>UEFI</Tab><Tab $w={49}>명령 풀</Tab><Tab $w={40}>정보</Tab>
          </Tabs>
          <TabPage>
            <Group $h={88}>
              <GroupTitle>설명</GroupTitle>
              <DescLine>BOOTICE는 디스크의 MBR이나 PBR을 (설치, 백업, 복원) 할수있는</DescLine>
              <DescLine $mb={11}>부팅관리 프로그램입니다.</DescLine>
              <DescLine>또한, BOOTICE는 디스크 파티션을 관리 (섹터 편집, 백업 또는 복원)</DescLine>
              <DescLine>파티션 포맷 기능을 제공합니다.</DescLine>
            </Group>
            <Group $h={41} $mt={12}>
              <GroupTitle>대상 디스크</GroupTitle>
              <Combo>HD2: WDC WD1002FAEX-00Z3A0 (931.5 GB, G: H: I:)<Chev c="#666" /></Combo>
              <BtnRow>
                <GreyBtn $w={70}>새로고침(R)</GreyBtn><GreyBtn $w={70}>MBR 작업(M)</GreyBtn><GreyBtn $w={67}>PBR 작업(P)</GreyBtn><GreyBtn $w={85}>파티션관리(G)</GreyBtn><GreyBtn $w={67}>섹터편집(S)</GreyBtn>
              </BtnRow>
            </Group>
          </TabPage>
          <BootFoot>
            <BootCredit>한글화 : 로웰</BootCredit>
            <GreyBtn $w={59} $h={22}>종료(X)</GreyBtn>
          </BootFoot>
        </Win>

        {/* Partition manager */}
        <Win $x={1187} $y={397} $w={622} $h={401} $z={3}>
          <TitleBar $h={29} $pb={3}>
            파티션 관리
            <WinBtns $c="#888"><WinBtn $w={30}><WinGlyph k="x" c="#888" /></WinBtn></WinBtns>
          </TitleBar>
          <PartBody>
            <PmList>
              <PmHead>
                {pmCols.map(([h, r]) => <PmHeadCell key={h} $r={!!r}>{h}</PmHeadCell>)}
              </PmHead>
              {pmRows.map((row, i) => (
                <PmRow key={i}>
                  {row.map((c, j) => <PmCell key={j} $r={j >= 7}>{c}</PmCell>)}
                  <PmCell />
                </PmRow>
              ))}
            </PmList>
            <InfoBox>
              <InfoLine $pr={243}>HD2: WDC WD1002FAEX-00Z3A0 (931.5 GB, G: H: I:)</InfoLine>
              <InfoLine $pr={67}>[C/H/S]: 121601/255/63; [전체 섹터]: 1953525168/512; [용량]: 931.5 GB.</InfoLine>
            </InfoBox>
            <ActionBox>
              <ActionRow>
                <GreyBtn $w={82} $h={24}>숨김해제(U)</GreyBtn>
                <GreyBtn $w={124} $h={24} $off>드라이브 문자 할당(L)</GreyBtn>
                <GreyBtn $w={130} $h={24}>드라이브 문자 제거(V)</GreyBtn>
                <GreyBtn $w={68} $h={24}>ID 수정(I)</GreyBtn>
              </ActionRow>
              <ActionRow>
                <GreyBtn $w={99} $h={25}>재 파티션 (P)</GreyBtn>
                <GreyBtn $w={122} $h={25}>파티션 테이블 백업(B)</GreyBtn>
                <GreyBtn $w={122} $h={25}>파티션 테이블 복원(R)</GreyBtn>
                <GreyBtn $w={53} $h={25}>닫기(E)</GreyBtn>
              </ActionRow>
            </ActionBox>
          </PartBody>
        </Win>

        {/* Explorer */}
        <Win $x={355} $y={639} $w={1031} $h={343} $z={4} $b="#064f70">
          <ExTitle>
            <FolderIc s={16} /><QSep />
            <svg width="16" height="16" viewBox="0 0 16 16"><path d="M3 1h7l3 3v11H3z" fill="#fff" stroke="#999" /><path d="M5 9l2 2 4-5" stroke="#e23a2e" strokeWidth="1.6" fill="none" /></svg>
            <QGap $w={6} />
            <FolderIc s={16} />
            <QGap $w={2} />
            <svg width="12" height="12" viewBox="0 0 12 12"><path d="M2 3h8M2.5 6h7L6 10z" fill="#0e2a38" stroke="#0e2a38" /></svg>
            <QSep $r={5} />
            <QTitle>I:₩EFI₩Microsoft₩Boot</QTitle>
            <WinBtns $c="#fff">
              <WinBtn><WinGlyph k="min" c="#fff" /></WinBtn><WinBtn><WinGlyph k="max" c="#fff" /></WinBtn><WinBtn><WinGlyph k="x" c="#fff" /></WinBtn>
            </WinBtns>
          </ExTitle>
          <RibbonTabs>
            <RibTab $w={56} $on>파일</RibTab>
            <RibTab $w={40}>홈</RibTab>
            <RibTab $w={52}>공유</RibTab>
            <RibTab $w={56}>보기</RibTab>
            <RibRight><Chev c="#aaa" /><Help>?</Help></RibRight>
          </RibbonTabs>
          <NavRow>
            <NavBtns>
              <NavBtn $w={15}><Arrow left c="#777" /></NavBtn>
              <NavBtn $w={29}><Arrow c="#ccc" /></NavBtn>
              <NavBtn $w={22}><Chev c="#aaa" s={8} /></NavBtn>
              <NavBtn $w={18}>
                <svg width="14" height="14" viewBox="0 0 14 14"><path d="M7 13V2M2.5 6.5L7 2l4.5 4.5" fill="none" stroke="#666" strokeWidth="1.7" /></svg>
              </NavBtn>
            </NavBtns>
            <Address>
              <FolderIc s={15} />
              <CrumbGap><Chev d="right" c="#888" s={8} /></CrumbGap>
              <Crumb>내 PC</Crumb>
              <CrumbGap><Chev d="right" c="#888" s={8} /></CrumbGap>
              <WideCrumb>로컬 디스크 (I:)</WideCrumb>
              <CrumbGap><Chev d="right" c="#888" s={8} /></CrumbGap>
              <Crumb>EFI</Crumb>
              <CrumbGap><Chev d="right" c="#888" s={8} /></CrumbGap>
              <Crumb>Microsoft</Crumb>
              <CrumbGap><Chev d="right" c="#888" s={8} /></CrumbGap>
              <Crumb>Boot</Crumb>
              <AddrDrop>
                <DropCell $w={29}><Chev c="#666" /></DropCell>
                <DropCell $w={29} $line>
                  <svg width="14" height="14" viewBox="0 0 14 14"><path d="M11 5a4.6 4.6 0 1 1-1.6-2.2" fill="none" stroke="#777" strokeWidth="1.4" /><path d="M7.8 0.6l2.2 2.4-2.6 1.2" fill="none" stroke="#777" strokeWidth="1.2" /></svg>
                </DropCell>
              </AddrDrop>
            </Address>
            <Search>
              <svg width="14" height="14" viewBox="0 0 14 14"><circle cx="8.5" cy="5.5" r="4" fill="none" stroke="#666" strokeWidth="1.4" /><path d="M5.5 8.5L1.5 12.5" stroke="#666" strokeWidth="2" /></svg>
            </Search>
          </NavRow>
          <ExMain>
            <NavPane>
              <NavItem $pad={25}>
                <svg width="16" height="16" viewBox="0 0 16 16"><path d="M9 1l1.6 4.6L15 6l-3.4 3 1 4.8L8.5 11l-4 3L6 9 1 7h6z" fill="#3a8fdc" /></svg>
                <span>즐겨찾기</span>
              </NavItem>
              <NavItem $pad={31}>
                <svg width="17" height="15" viewBox="0 0 17 15"><rect x=".5" y="1" width="16" height="12" fill="#1e8ae0" stroke="#0a66b0" /><rect x="0" y="12" width="17" height="2" fill="#0a4a80" /></svg>
                <span>바탕 화면</span><Pin><PinIc /></Pin>
              </NavItem>
              <NavItem $pad={33}>
                <svg width="16" height="16" viewBox="0 0 16 16"><path d="M5 0h6v7h4l-7 8-7-8h4z" fill="#2f84dc" /></svg>
                <span>다운로드</span><Pin><PinIc /></Pin>
              </NavItem>
              <NavItem $pad={34}>
                <svg width="14" height="16" viewBox="0 0 14 16"><path d="M1 .5h8.5L13 4v11.5H1z" fill="#fff" stroke="#8a9aa8" /><path d="M3 5h6M3 7.5h8M3 10h8M3 12.5h8" stroke="#7a9ab8" /></svg>
                <span>문서</span><Pin><PinIc /></Pin>
              </NavItem>
              <NavItem $pad={31}>
                <svg width="16" height="14" viewBox="0 0 16 14"><rect x=".5" y=".5" width="15" height="13" fill="#fff" stroke="#8a9098" /><rect x="2" y="2" width="12" height="6" fill="#9ac8e0" /><path d="M2 9l4-3 4 2 4-1v5H2z" fill="#4a7a50" /></svg>
                <span>사진</span><Pin><PinIc /></Pin>
              </NavItem>
              {["boot", "boot", "캡처", "캡처"].map((t, i) => (
                <NavItem key={i} $pad={31}><FolderIc s={15} /><span>{t}</span></NavItem>
              ))}
            </NavPane>
            <VScroll $w={15}>
              <VEnd $mt="3px"><Chev d="up" c="#444" /></VEnd>
              <VThumb $top={0} $h={86} />
              <Spacer />
              <VEnd $mt="0"><Chev c="#444" /></VEnd>
            </VScroll>
            <FileList>
              <FileHead>
                <SortMark><Chev d="up" c="#999" w={1} /></SortMark>
                <FileHeadCell $pl={4} $line>이름</FileHeadCell>
                <FileHeadCell $pl={7} $line>수정한 날짜</FileHeadCell>
                <FileHeadCell $pl={8} $line>유형</FileHeadCell>
                <FileHeadCell $pl={7} $line>크기</FileHeadCell>
              </FileHead>
              <Stub />
              {files.map(f => (
                <FileRow key={f.n} $sel={f.sel}>
                  <FileName>{f.k === "folder" ? <FolderIc s={15} /> : f.k === "dll" ? <DllIc /> : <FileIc />}{f.n}</FileName>
                  <FileCell>{f.d}</FileCell>
                  <FileCell $pl={8}>{f.t}</FileCell>
                  <FileCell $r>{f.s}</FileCell>
                </FileRow>
              ))}
            </FileList>
            <VScroll $w={15}>
              <VEnd $mt="3px"><Chev d="up" c="#444" /></VEnd>
              <VThumb $top={112} $h={37} />
              <Spacer />
              <VEnd $mt="0"><Chev c="#444" /></VEnd>
            </VScroll>
            <QGap $w={2} />
          </ExMain>
          <StatusBar>
            <StatusCell $w={62}>58개 항목</StatusCell>
            <StatusCell $w={145}>1개 항목 선택함 20.0KB</StatusCell>
            <ViewBtns>
              <ViewBtn $on>
                <svg width="16" height="14" viewBox="0 0 16 14"><path d="M1 1h3v3H1zM1 5.5h3v3H1zM1 10h3v3H1z" fill="none" stroke="#667" /><path d="M6 2.5h10M6 7h10M6 11.5h10" stroke="#667" strokeDasharray="3 1" /></svg>
              </ViewBtn>
              <ViewBtn>
                <svg width="15" height="13" viewBox="0 0 15 13"><rect x=".5" y=".5" width="14" height="12" fill="#fff" stroke="#778" /><rect x="2" y="2" width="11" height="6" fill="#8ab8d8" /><path d="M2 8l4-3 7 3v3H2z" fill="#3a6a70" /></svg>
              </ViewBtn>
            </ViewBtns>
          </StatusBar>
        </Win>

        <Marker $x={472} $y={530} $w={87} $h={77} />
        <Marker $x={1203} $y={461} $w={566} $h={23} />
        <Marker $x={620} $y={696} $w={188} $h={38} />
        <Marker $x={511} $y={827} $w={78} $h={26} />
      </Desktop>

      <TaskBar>
        <StartBtn><WinLogo /></StartBtn>
        <TaskItem $on><ExplorerIcon s={24} /></TaskItem>
        {taskIcons.map((I, i) => <TaskItem key={i}><I s={24} /></TaskItem>)}
        <TaskItem $open><BootIcon s={24} /></TaskItem>
        <TaskItem $open><MgmtIcon s={26} /></TaskItem>
        <Tray>
          <TrayItem $w={24}>
            <svg width="14" height="14" viewBox="0 0 14 14"><rect x="4" y="1" width="8" height="8" fill="#ddd" stroke="#222" /><rect x="1" y="5" width="8" height="8" fill="#fff" stroke="#222" /></svg>
          </TrayItem>
          <TrayItem $w={25}>
            <svg width="18" height="14" viewBox="0 0 18 14"><polygon points="10,0 12,7 1,13" fill="#e81010" /><polygon points="10,6 17,13 6,12" fill="#14d43a" /></svg>
          </TrayItem>
          <TrayItem $w={24}>
            <svg width="16" height="16" viewBox="0 0 16 16"><rect width="16" height="16" rx="1" fill="#2b2f2b" /><ellipse cx="8" cy="8" rx="6" ry="4" fill="#76b900" /><ellipse cx="8" cy="8" rx="2.4" ry="1.8" fill="#2b2f2b" /></svg>
          </TrayItem>
          <TrayItem $w={24}>
            <svg width="14" height="17" viewBox="0 0 14 17"><path d="M3 5h7v10a1.5 1.5 0 0 1-1.5 1.5h-4A1.5 1.5 0 0 1 3 15zM4 1h5v4H4z" fill="none" stroke="#fff" /><path d="M9 14l1.5 1.5L14 12" stroke="#ccc" fill="none" /></svg>
          </TrayItem>
          <TrayItem $w={23}>
            <svg width="16" height="15" viewBox="0 0 16 15"><rect x="5" y="1" width="10" height="8" fill="none" stroke="#fff" /><rect x="1" y="1" width="6" height="4" fill="#0c3f78" stroke="#fff" /><path d="M10 9v3M6 13h8M3 5v5" stroke="#fff" fill="none" /></svg>
          </TrayItem>
          <TrayItem $w={24}>
            <svg width="17" height="14" viewBox="0 0 17 14"><path d="M1 5h3l4-4v12l-4-4H1z" fill="none" stroke="#fff" /><path d="M10.5 4.5a3.5 3.5 0 0 1 0 5M12.5 3a6 6 0 0 1 0 8M14.5 1.5a8 8 0 0 1 0 11" fill="none" stroke="#fff" /></svg>
          </TrayItem>
          <TrayItem $w={20}>A</TrayItem>
          <Clock><div>오후 3:20</div><div>2020-06-16</div></Clock>
          <ShowDesk />
        </Tray>
      </TaskBar>
    </Screen>
  );
}
